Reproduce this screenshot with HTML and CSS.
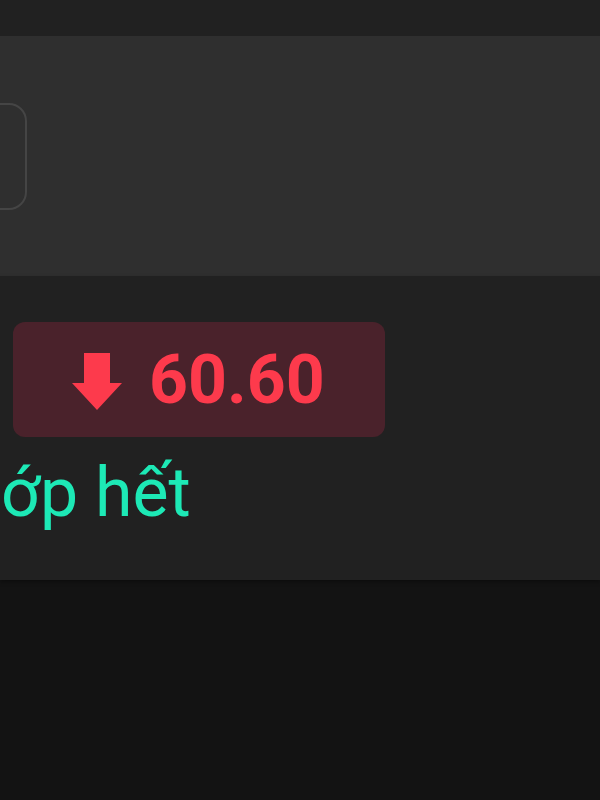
FILE: index.html
```html
<!DOCTYPE html>
<html lang="vi">
<head>
    <meta charset="UTF-8">
    <meta name="viewport" content="width=device-width, initial-scale=1.0">
    <title>Giá</title>
    <link rel="stylesheet" href="styles.css">
</head>
<body>

    <!-- Top bar -->
    <div class="top-bar"></div>

    <!-- Input panel -->
    <div class="panel">
        <div class="input-box"></div>
    </div>

    <!-- Price change -->
    <div class="price-section">
        <div class="price-badge">
            <svg class="arrow" viewBox="0 0 50 57" width="50" height="57">
                <path d="M12 0 H38 V30 H50 L25 57 L0 30 H12 Z" fill="#fd3a4c"/>
            </svg>
            <span class="price-value">60.60</span>
        </div>
        <p class="status-text">ớp hết</p>
    </div>

    <div class="bottom-area"></div>

</body>
</html>
```

FILE: styles.css
```css
body {
    font-family: Roboto, "Noto Sans", Arial, sans-serif;
    background-color: #131313;
    margin: 0;
    padding: 0;
    height: 800px;
    overflow: hidden;
    display: flex;
    flex-direction: column;
}

.top-bar {
    height: 36px;
    background-color: #212121;
}

.panel {
    height: 240px;
    background-color: #2f2f2f;
    padding-top: 67px;
    box-sizing: border-box;
}

.input-box {
    width: 100px;
    height: 107px;
    margin-left: -73px;
    border: 2px solid #454545;
    border-radius: 18px;
    box-sizing: border-box;
}

.price-section {
    height: 304px;
    background-color: #212121;
    padding: 46px 0 0 13px;
    box-sizing: border-box;
    box-shadow: 0 2px 4px rgba(0, 0, 0, 0.35);
}

.price-badge {
    width: 372px;
    height: 115px;
    background-color: #4a222b;
    border-radius: 12px;
    display: flex;
    align-items: center;
    padding-left: 59px;
    box-sizing: border-box;
    gap: 27px;
}

.arrow {
    margin-top: 3px;
}

.price-value {
    color: #fd3a4c;
    font-size: 68px;
    font-weight: bold;
    line-height: 1;
}

.status-text {
    margin: 19px 0 0 -12px;
    color: #1de9b6;
    font-size: 68px;
    line-height: 1.1;
}

.bottom-area {
    flex: 1;
}
```
